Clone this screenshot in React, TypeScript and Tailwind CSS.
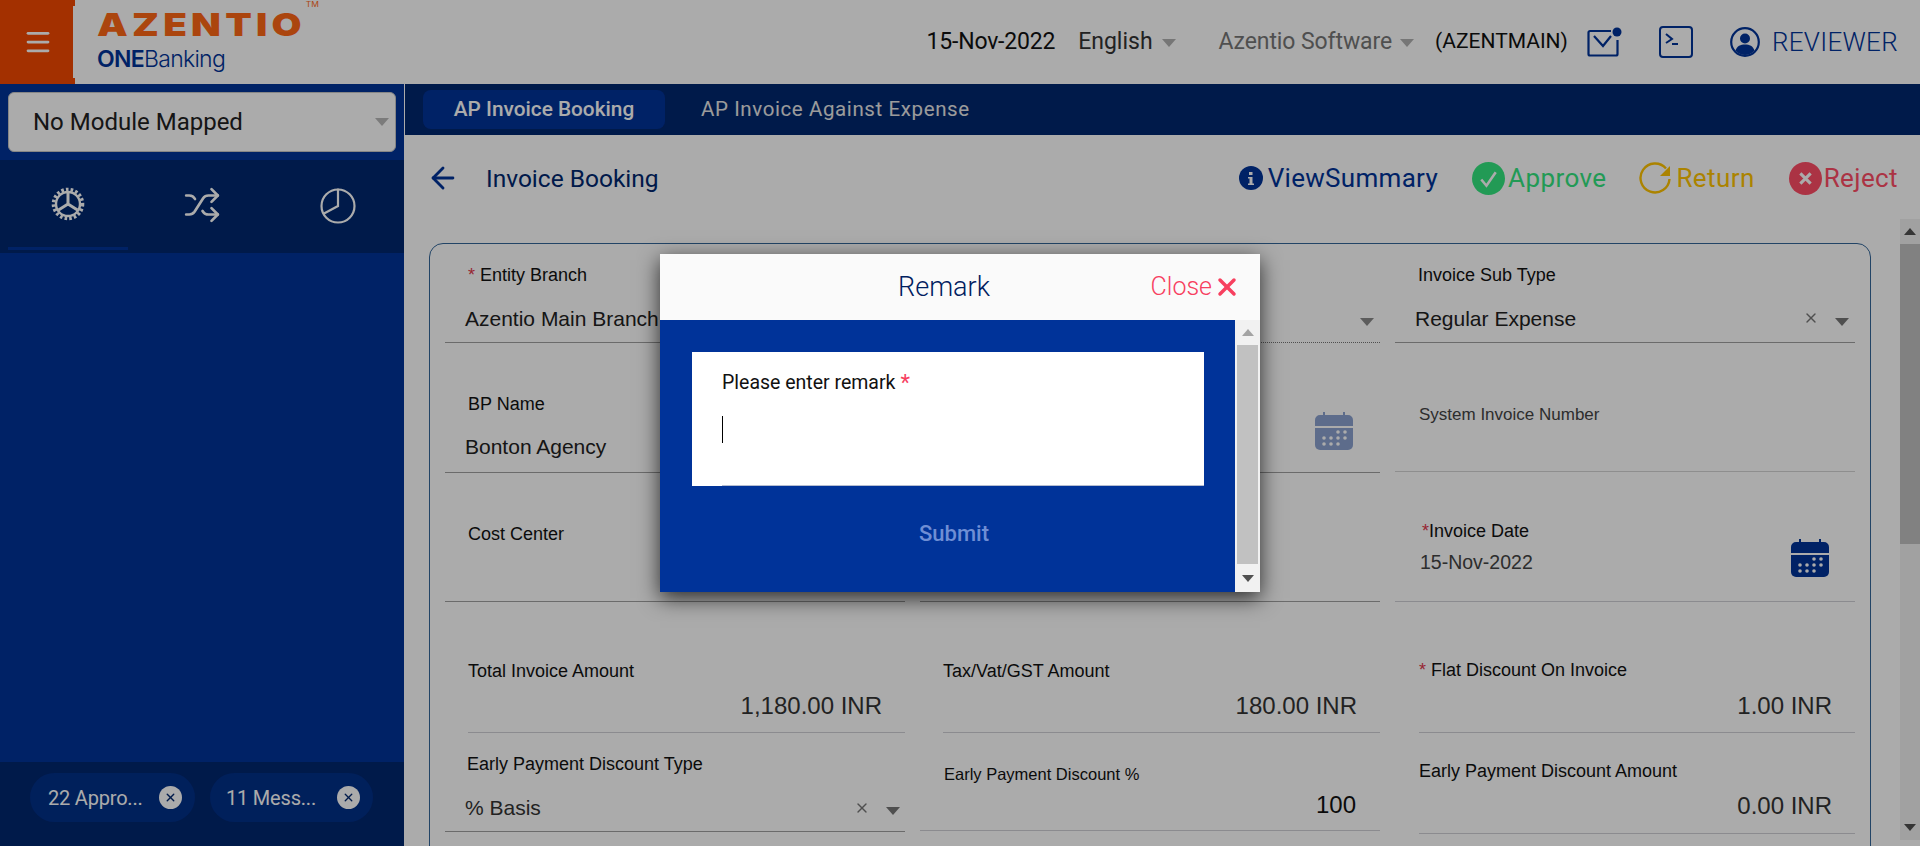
import React from 'react';
import { Menu, Shuffle, ArrowLeft, X } from 'lucide-react';

const Caret = ({ className = 'border-t-[#8a8a8a]' }: { className?: string }) => (
  <span className={`inline-block w-0 h-0 border-x-[7px] border-x-transparent border-t-[8px] ${className}`} />
);

const ArrowUp = ({ className }: { className: string }) => (
  <span className={`block w-0 h-0 border-x-[6px] border-x-transparent border-b-[7px] ${className}`} />
);

const ArrowDown = ({ className }: { className: string }) => (
  <span className={`block w-0 h-0 border-x-[6px] border-x-transparent border-t-[7px] ${className}`} />
);

const GearIcon = () => (
  <svg width="36" height="36" viewBox="0 0 36 36" fill="none" stroke="#fff" strokeWidth="2.4">
    <circle cx="18" cy="18" r="12" />
    <circle cx="18" cy="18" r="14.5" strokeWidth="3.6" strokeDasharray="2.6 2.1" />
    <path d="M18 18V7M18 18l9.5 6M18 18l-9.5 6" strokeWidth="3" />
  </svg>
);

const PieIcon = () => (
  <svg width="38" height="38" viewBox="0 0 38 38" fill="none" stroke="#fff" strokeWidth="2.2" strokeLinecap="round">
    <circle cx="19" cy="20" r="16.5" />
    <path d="M19 3.5V20L5 27.5" />
  </svg>
);

const MailIcon = () => (
  <svg width="36" height="30" viewBox="0 0 36 30" fill="none" stroke="#003399" strokeWidth="2.2">
    <path d="M24 4H3a1.5 1.5 0 0 0-1.5 1.500V27A1.500 1.500 0 0 0 3 28.500h26a1.500 1.500 0 0 0 1.500-1.500V13" />
    <path d="M7 9l9 10 8-10" />
    <circle cx="30" cy="5" r="4.500" fill="#003399" stroke="none" />
  </svg>
);

const TerminalIcon = () => (
  <svg width="34" height="32" viewBox="0 0 34 32" fill="none" stroke="#003399" strokeWidth="2">
    <rect x="1" y="1" width="32" height="30" rx="3" />
    <path d="M7 8l6 5-6 4M13 18h6" />
  </svg>
);

const UserIcon = () => (
  <svg width="30" height="30" viewBox="0 0 30 30" fill="none">
    <circle cx="15" cy="15" r="13.800" stroke="#003399" strokeWidth="2.200" />
    <circle cx="15" cy="11.500" r="5" fill="#003399" />
    <path d="M5.500 23.500c1.500-4.500 5-6 9.500-6s8 1.500 9.500 6c-2.500 2.800-5.700 4.500-9.500 4.500s-7-1.700-9.500-4.500z" fill="#003399" />
  </svg>
);

const InfoIcon = () => (
  <svg width="24" height="24" viewBox="0 0 24 24">
    <circle cx="12" cy="12" r="12" fill="#003399" />
    <path d="M10 6h3.500v3H10zM9 11h4.500v6.500H15V19H9v-1.500h1.500V12.500H9z" fill="#fff" />
  </svg>
);

const ApproveIcon = () => (
  <svg width="33" height="33" viewBox="0 0 32 32" fill="none">
    <circle cx="16" cy="16" r="16" fill="#34e67f" />
    <path d="M9 17l5 6 9-13" stroke="#fff" strokeWidth="2.500" />
  </svg>
);

const ReturnIcon = () => (
  <svg width="34" height="32" viewBox="0 0 34 32" fill="none">
    <path d="M27 6.500A14.500 14.500 0 1 0 30.500 17" stroke="#ffc400" strokeWidth="2.400" />
    <path d="M31 4v10H21z" fill="#ffc400" />
  </svg>
);

const RejectIcon = () => (
  <svg width="33" height="33" viewBox="0 0 32 32" fill="none">
    <circle cx="16" cy="16" r="16" fill="#ff4d66" />
    <path d="M11 11l10 10M21 11L11 21" stroke="#fff" strokeWidth="3" />
  </svg>
);

const CalendarIcon = ({ className = '' }: { className?: string }) => (
  <svg width="38" height="38" viewBox="0 0 38 38" className={className}>
    <path d="M8 0h2v3h18V0h2v3h3a5 5 0 0 1 5 5v6H0V8a5 5 0 0 1 5-5h3z" fill="#003399" />
    <path d="M0 16h38v17a5 5 0 0 1-5 5H5a5 5 0 0 1-5-5z" fill="#003399" />
    <g fill="#fff">
      <circle cx="23" cy="20" r="1.800" /><circle cx="30" cy="20" r="1.800" />
      <circle cx="9" cy="26" r="1.800" /><circle cx="16" cy="26" r="1.800" /><circle cx="23" cy="26" r="1.800" /><circle cx="30" cy="26" r="1.800" />
      <circle cx="9" cy="32" r="1.800" /><circle cx="16" cy="32" r="1.800" /><circle cx="23" cy="32" r="1.800" />
    </g>
  </svg>
);

const Chip = ({ text, className }: { text: string; className: string }) => (
  <div className={`h-[49px] rounded-full bg-[#003088] flex items-center justify-between pr-[13px] text-white text-[20px] tracking-[-0.2px] ${className}`}>
    <span>{text}</span>
    <span className="w-[23px] h-[23px] rounded-full bg-white flex items-center justify-center">
      <X size={13} strokeWidth={2.500} className="text-[#00276f]" />
    </span>
  </div>
);

interface FieldProps {
  label?: string;
  value?: string;
  required?: boolean;
  cellClass: string;
  labelClass?: string;
  valueClass?: string;
  starClass?: string;
  children?: React.ReactNode;
}

const Field = ({ label, value, required, cellClass, labelClass = '', valueClass = '', starClass = 'mr-[5px]', children }: FieldProps) => (
  <div className={`relative flex flex-col border-b ${cellClass}`}>
    {label && (
      <div className={`text-[#111] text-[18px] leading-[20px] whitespace-nowrap ${labelClass}`}>
        {required && <span className={`text-[#e2384d] ${starClass}`}>*</span>}
        {label}
      </div>
    )}
    {value && <div className={`text-[#222] leading-[24px] ${valueClass}`}>{value}</div>}
    {children}
  </div>
);

const App = () => {
  return (
    <div className="relative w-[1920px] h-[846px] overflow-hidden bg-white font-['Roboto',sans-serif]">
      {/* Header */}
      <header className="h-[84px] flex items-center bg-white">
        <div className="relative w-[75px] h-[84px] bg-[#f34800] flex items-center justify-center shrink-0">
          <Menu size={30} strokeWidth={2.200} className="text-white" />
          <span className="absolute right-0 top-[6px] bottom-[6px] w-[2px] bg-white" />
        </div>
        <div className="ml-[22px] flex flex-col">
          <div className="origin-left scale-x-[1.21] -mt-[2px] mb-[2px] text-[#ff6716] text-[32px] leading-[34px] font-black tracking-[3.500px] font-['Inter',sans-serif]">
            AZENTIO<sup className="text-[7px] font-normal tracking-normal align-top">TM</sup>
          </div>
          <div className="text-[#003399] text-[23px] leading-[30px] font-['Inter',sans-serif] font-light tracking-[-0.7px]">
            <span className="font-semibold">ONE</span>Banking
          </div>
        </div>
        <div className="ml-auto pr-[22px] flex items-center text-[23px]">
          <span className="text-[#111] tracking-[-0.2px]">15-Nov-2022</span>
          <span className="ml-[23px] text-[#333]">English</span>
          <span className="ml-[9px] -mt-[4px]"><Caret className="border-t-[#b0b0b0]" /></span>
          <span className="ml-[43px] text-[#777] tracking-[-0.1px]">Azentio Software</span>
          <span className="ml-[8px] -mt-[4px]"><Caret className="border-t-[#b0b0b0]" /></span>
          <span className="ml-[21px] text-[#111] text-[21px]">(AZENTMAIN)</span>
          <span className="ml-[19px]"><MailIcon /></span>
          <span className="ml-[36px]"><TerminalIcon /></span>
          <span className="ml-[37px]"><UserIcon /></span>
          <span className="ml-[12px] text-[#003399] text-[26px] font-light tracking-[0.3px]">REVIEWER</span>
        </div>
      </header>

      <div className="flex h-[762px]">
        {/* Sidebar */}
        <aside className="w-[405px] shrink-0 flex flex-col bg-[#003399] border-r border-white">
          <div className="h-[76px] flex items-center px-[8px]">
            <div className="w-[389px] h-[60px] bg-white rounded-[6px] border border-[#c8c8c8] flex items-center justify-between pl-[24px] pr-[6px] text-[24px] text-[#222]">
              No Module Mapped
              <Caret className="border-t-[#b8b8b8]" />
            </div>
          </div>
          <div className="h-[93px] bg-[#00276f] flex relative">
            <div className="w-[120px] ml-[8px] flex items-center justify-center border-b-[3px] border-[#003399] h-[90px]">
              <GearIcon />
            </div>
            <div className="w-[130px] ml-[9px] flex items-center justify-center h-[90px]">
              <Shuffle size={38} strokeWidth={1.700} className="text-white" />
            </div>
            <div className="flex-1 flex items-center justify-center h-[90px] pl-[5px]">
              <PieIcon />
            </div>
          </div>
          <div className="flex-1" />
          <div className="h-[84px] bg-[#00276f] flex items-center pl-[30px] gap-[15px] pb-[13px]">
            <Chip text="22 Appro..." className="w-[165px] pl-[18px]" />
            <Chip text="11 Mess..." className="w-[163px] pl-[16px]" />
          </div>
        </aside>

        {/* Main */}
        <main className="flex-1 flex flex-col min-w-0">
          <div className="h-[51px] bg-[#00276f] flex items-center pl-[18px] shrink-0">
            <div className="w-[242px] h-[39px] rounded-[8px] bg-[#003399] flex items-center justify-center text-white text-[20.800px] font-medium">
              AP Invoice Booking
            </div>
            <div className="ml-[36px] text-[#e8e8e8] text-[20.500px] tracking-[0.6px]">AP Invoice Against Expense</div>
          </div>
          <div className="flex-1 flex min-h-0">
            <div className="flex-1 min-w-0 pl-[24px] pr-[29px]">
              <div className="h-[108px] flex items-center pb-[22px] -mr-[27px]">
                <ArrowLeft size={34} strokeWidth={2} className="text-[#003399] -ml-[3px]" />
                <span className="ml-[26px] mt-[2px] text-[#00276f] text-[24.500px]">Invoice Booking</span>
                <div className="ml-auto flex items-center text-[26px]">
                  <InfoIcon />
                  <span className="ml-[5px] text-[#003399] tracking-[0.3px]">ViewSummary</span>
                  <span className="ml-[34px]"><ApproveIcon /></span>
                  <span className="ml-[3px] text-[#34e67f] tracking-[0.4px]">Approve</span>
                  <span className="ml-[33px]"><ReturnIcon /></span>
                  <span className="ml-[3px] text-[#ffc400] tracking-[0.4px]">Return</span>
                  <span className="ml-[34px]"><RejectIcon /></span>
                  <span className="ml-[2px] text-[#ff4d66] tracking-[0.4px]">Reject</span>
                </div>
              </div>

              <div className="h-[640px] border border-[#336699] rounded-[14px] px-[15px] font-['Liberation_Sans',sans-serif]">
                <div className="grid grid-cols-3 gap-x-[15px]">
                  <Field label="Entity Branch" required value="Azentio Main Branch" cellClass="h-[99px] border-[#a0a0a0]" labelClass="mt-[21px] ml-[23px]" valueClass="mt-[22px] ml-[20px] text-[21px]" />
                  <div className="relative h-[99px] border-b border-dotted border-[#777]">
                    <span className="absolute right-[6px] top-[65px]"><Caret /></span>
                  </div>
                  <Field label="Invoice Sub Type" value="Regular Expense" cellClass="h-[99px] border-[#a0a0a0]" labelClass="mt-[21px] ml-[23px]" valueClass="mt-[22px] ml-[20px] text-[21px]">
                    <span className="absolute right-[36px] top-[66px]"><X size={16} className="text-[#777]" /></span>
                    <span className="absolute right-[6px] top-[65px]"><Caret className="border-t-[#777]" /></span>
                  </Field>

                  <Field label="BP Name" value="Bonton Agency" cellClass="h-[130px] border-[#a0a0a0]" labelClass="mt-[51px] ml-[23px]" valueClass="mt-[21px] ml-[20px] text-[21px]" />
                  <div className="relative h-[130px] border-b border-[#a0a0a0]">
                    <span className="absolute right-[27px] top-[69px]"><CalendarIcon className="opacity-45" /></span>
                  </div>
                  <Field label="System Invoice Number" cellClass="h-[129px] border-[#d4d4d4]" labelClass="mt-[62px] ml-[24px] !text-[#444] !text-[17px]" />

                  <Field label="Cost Center" cellClass="h-[129px] border-[#a0a0a0]" labelClass="mt-[51px] ml-[23px]" />
                  <div className="h-[129px] border-b border-[#a0a0a0]" />
                  <Field label="Invoice Date" required starClass="mr-0" value="15-Nov-2022" cellClass="h-[129px] border-[#cfcfd5]" labelClass="mt-[48px] ml-[27px]" valueClass="mt-[9px] ml-[25px] text-[19.500px] !text-[#444]">
                    <span className="absolute right-[26px] top-[66px]"><CalendarIcon /></span>
                  </Field>

                  <div className="pl-[23px]">
                    <Field label="Total Invoice Amount" value="1,180.00 INR" cellClass="h-[131px] border-[#cfcfd5]" labelClass="mt-[59px]" valueClass="mt-[13px] text-right pr-[23px] text-[24px] !text-[#333]" />
                  </div>
                  <div className="pl-[23px]">
                    <Field label="Tax/Vat/GST Amount" value="180.00 INR" cellClass="h-[131px] border-[#cfcfd5]" labelClass="mt-[59px]" valueClass="mt-[13px] text-right pr-[23px] text-[24px] !text-[#333]" />
                  </div>
                  <div className="pl-[24px]">
                    <Field label="Flat Discount On Invoice" required value="1.00 INR" cellClass="h-[131px] border-[#cfcfd5]" labelClass="mt-[58px]" valueClass="mt-[14px] text-right pr-[23px] text-[24px] !text-[#333]" />
                  </div>

                  <Field label="Early Payment Discount Type" value="% Basis" cellClass="h-[99px] border-[#a0a0a0]" labelClass="mt-[21px] ml-[22px]" valueClass="mt-[22px] ml-[20px] text-[21px] !text-[#333]">
                    <span className="absolute right-[35px] top-[67px]"><X size={16} className="text-[#777]" /></span>
                    <span className="absolute right-[5px] top-[65px]"><Caret className="border-t-[#777]" /></span>
                  </Field>
                  <Field label="Early Payment Discount %" value="100" cellClass="h-[98px] border-[#cfcfd5]" labelClass="mt-[31px] ml-[24px] !text-[16.500px]" valueClass="mt-[9px] text-right pr-[24px] text-[24px] !text-[#111]" />
                  <div className="pl-[24px]">
                    <Field label="Early Payment Discount Amount" value="0.00 INR" cellClass="h-[101px] border-[#cfcfd5]" labelClass="mt-[28px]" valueClass="mt-[13px] text-right pr-[23px] text-[24px] !text-[#333]" />
                  </div>
                </div>
              </div>
            </div>
            {/* Page scrollbar */}
            <div className="w-[20px] shrink-0 mt-[84px] mb-[6px] bg-[#f1f1f1] flex flex-col items-center">
              <div className="h-[25px] flex items-center"><ArrowUp className="border-b-[#505050]" /></div>
              <div className="w-[20px] h-[300px] bg-[#c1c1c1]" />
              <div className="mt-auto h-[25px] flex items-center"><ArrowDown className="border-t-[#505050]" /></div>
            </div>
          </div>
        </main>
      </div>

      {/* Modal overlay */}
      <div className="absolute inset-0 bg-black/33 pt-[254px] pl-[660px]">
        <div className="w-[600px] h-[338px] flex flex-col shadow-[0_6px_20px_rgba(0,0,0,0.75)]">
          <div className="h-[66px] bg-[#fafafa] flex items-center relative shrink-0">
            <span className="w-full text-center text-[#00205f] text-[27px] font-light pr-[32px]">Remark</span>
            <span className="absolute right-[19px] flex items-center gap-[1px] text-[#f7405f] text-[25px] font-light">
              Close
              <X size={28} strokeWidth={3} />
            </span>
          </div>
          <div className="flex-1 flex min-h-0">
            <div className="flex-1 bg-[#003399] pt-[32px] pl-[32px] pr-[31px]">
              <div className="h-[134px] bg-white relative pt-[19px] pl-[30px]">
                <div className="text-[#111] text-[19.500px] leading-[24px] flex">
                  Please enter remark <span className="text-[#f7405f] text-[22px] ml-[5px]">*</span>
                </div>
                <div className="w-px h-[27px] bg-black mt-[21px]" />
                <div className="absolute left-[30px] right-0 bottom-0 h-px bg-[#b5bdd0]" />
              </div>
              <div className="mt-[35px] text-center text-[#6f8ed4] text-[22px] font-medium leading-[26px] pl-[12px]">Submit</div>
            </div>
            <div className="w-[25px] bg-[#f1f1f1] flex flex-col items-center shrink-0">
              <div className="h-[25px] flex items-center"><ArrowUp className="border-b-[#a3a3a3]" /></div>
              <div className="w-[21px] h-[219px] bg-[#c1c1c1]" />
              <div className="mt-auto h-[28px] flex items-center"><ArrowDown className="border-t-[#505050]" /></div>
            </div>
          </div>
        </div>
      </div>
    </div>
  );
};

export default App;
